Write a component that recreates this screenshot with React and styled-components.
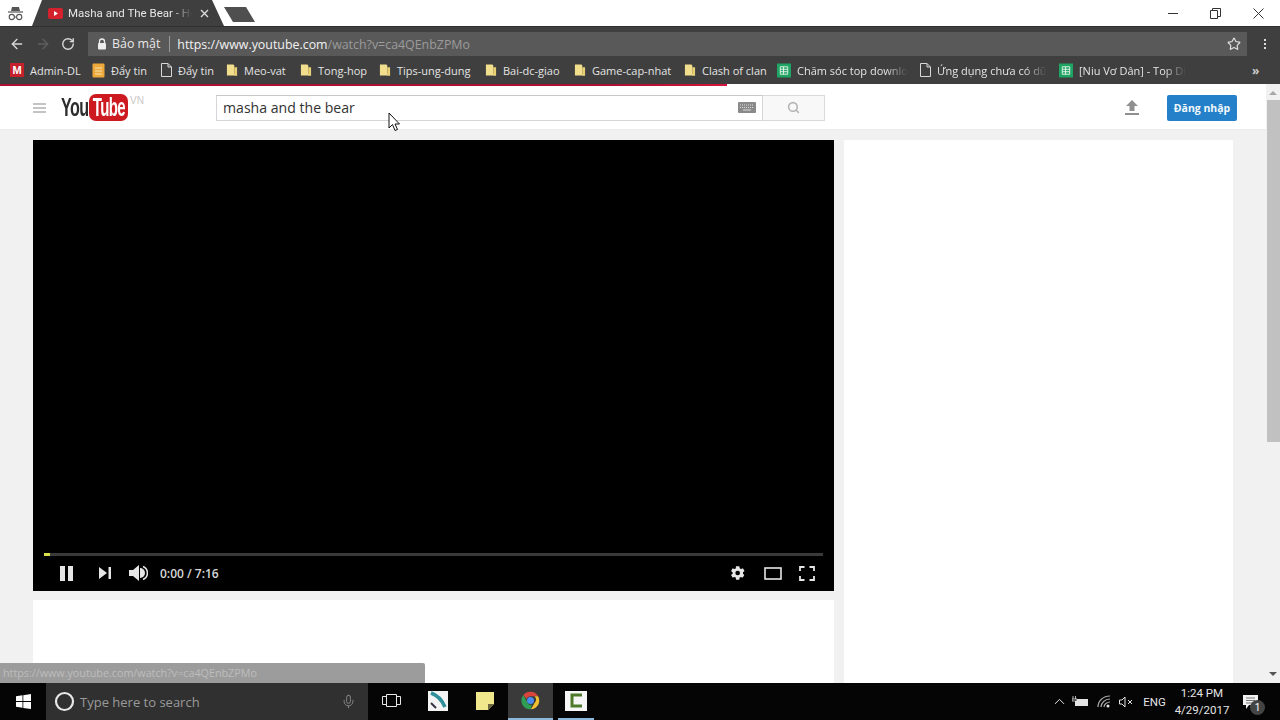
import React from "react";
import styled, { createGlobalStyle } from "styled-components";
import { ArrowLeft, ArrowRight, RotateCw, Star, Search, ChevronUp, Mic } from "lucide-react";

const GlobalStyle = createGlobalStyle`
  html, body {
    margin: 0;
    padding: 0;
    overflow: hidden;
    background: #fff;
  }
  * {
    box-sizing: border-box;
  }
`;

const Screen = styled.div`
  position: relative;
  width: 1280px;
  height: 720px;
  display: flex;
  flex-direction: column;
  overflow: hidden;
  font-family: "Open Sans", "Liberation Sans", sans-serif;
`;

/* browser chrome */
const TabStrip = styled.div`
  height: 27px;
  flex: none;
  display: flex;
  align-items: flex-end;
  background: #fff;
  border-bottom: 1px solid #2f2f2f;
`;

const IncognitoSlot = styled.div`
  width: 32px;
  height: 26px;
  flex: none;
  display: flex;
  align-items: center;
  padding-left: 8px;
`;

const Tab = styled.div`
  width: 192px;
  height: 26px;
  flex: none;
  display: flex;
  align-items: center;
  padding-left: 16px;
  background: #3f3f3f;
  clip-path: polygon(0 100%, 10px 0, 180px 0, 100% 100%);
`;

const TabTitle = styled.span`
  margin-left: 5px;
  width: 124px;
  margin-right: 8px;
  flex: none;
  white-space: nowrap;
  font-family: Roboto, "Liberation Sans", sans-serif;
  font-size: 11.5px;
  color: #e6e6e6;
  -webkit-mask-image: linear-gradient(to right, #000 84%, transparent 100%);
  mask-image: linear-gradient(to right, #000 84%, transparent 100%);
`;

const NewTab = styled.div`
  width: 31px;
  height: 15px;
  margin: 0 0 4px 0;
  flex: none;
  background: #4f4f4f;
  clip-path: polygon(0 0, 22px 0, 100% 100%, 9px 100%);
`;

const WindowControls = styled.div`
  margin-left: auto;
  height: 26px;
  display: flex;
  align-items: center;
  gap: 32px;
  padding-right: 16px;
`;

const Toolbar = styled.div`
  height: 29px;
  flex: none;
  display: flex;
  align-items: center;
  padding: 5px 0 0 9px;
  background: #3f3f3f;
`;

const NavGroup = styled.div`
  display: flex;
  align-items: center;
  gap: 10px;
  width: 79px;
  flex: none;
`;

const Omnibox = styled.div`
  width: 1159px;
  height: 24px;
  flex: none;
  display: flex;
  align-items: center;
  padding: 0 6px 0 9px;
  background: #595959;
  font-size: 12.4px;
`;

const SecureLabel = styled.span`
  margin-left: 5px;
  padding-right: 9px;
  border-right: 1px solid #9a9a9a;
  color: #e8e8e8;
  line-height: 16px;
`;

const UrlHost = styled.span`
  margin-left: 7px;
  color: #f2f2f2;
`;

const UrlPath = styled.span`
  color: #9b9b9b;
`;

const OmniStar = styled.div`
  margin-left: auto;
  display: flex;
`;

const MenuDots = styled.div`
  margin-left: 17px;
  display: flex;
  flex-direction: column;
  gap: 2px;

  span {
    width: 2px;
    height: 2px;
    background: #ddd;
  }
`;

const BookmarkBar = styled.div`
  height: 28px;
  flex: none;
  display: flex;
  align-items: center;
  padding-left: 10px;
  background: #3f3f3f;
`;

const Bookmark = styled.div`
  width: ${(p) => p.$w}px;
  flex: none;
  display: flex;
  align-items: center;
  gap: 6px;
  font-size: 11px;
  color: #e4e4e4;
  white-space: nowrap;
`;

const BookmarkText = styled.span`
  ${(p) =>
    p.$fade &&
    `-webkit-mask-image: linear-gradient(to right, #000 80%, transparent 100%);
     mask-image: linear-gradient(to right, #000 80%, transparent 100%);`}
`;

const Overflow = styled.span`
  margin-left: 9px;
  font-size: 12px;
  font-weight: 700;
  color: #ccc;
`;

const GmailBadge = styled.span`
  width: 14px;
  height: 14px;
  background: #c5202c;
  color: #fff;
  font-size: 11px;
  font-weight: 800;
  line-height: 14px;
  text-align: center;
  font-family: "Liberation Sans", sans-serif;
`;

/* page */
const Viewport = styled.div`
  position: relative;
  flex: 1;
  min-height: 0;
  display: flex;
`;

const LoadBar = styled.div`
  position: absolute;
  left: 0;
  top: 0;
  width: 727px;
  height: 2px;
  background: linear-gradient(to right, #ac1030, #ac1030 85%, #d4143a);
`;

const Content = styled.div`
  flex: 1;
  min-width: 0;
  display: flex;
  flex-direction: column;
  background: #f1f1f1;
`;

const Masthead = styled.div`
  height: 46px;
  flex: none;
  display: flex;
  align-items: center;
  background: #fff;
  border-bottom: 1px solid #ececec;
  padding: 2px 0 0 33px;
`;

const Burger = styled.div`
  width: 13px;
  display: flex;
  flex-direction: column;
  gap: 2px;
  margin-right: 15px;

  span {
    height: 2px;
    background: #c4c4c4;
  }
`;

const Logo = styled.div`
  width: 155px;
  height: 30px;
  flex: none;
  display: flex;
  align-items: center;
  font-family: "Liberation Sans", sans-serif;
`;

const LogoYou = styled.span`
  width: 27px;
  font-size: 26px;
  font-weight: 700;
  letter-spacing: -1px;
  color: #2c2c2c;
  transform: scaleX(0.62);
  transform-origin: left center;
  white-space: nowrap;
`;

const LogoTube = styled.span`
  width: 39px;
  height: 27px;
  margin-left: 1px;
  border-radius: 7px;
  background: #cc1a20;
  color: #fff;
  font-size: 25px;
  font-weight: 700;
  line-height: 27px;
  text-align: center;
  overflow: hidden;

  span {
    display: inline-block;
    letter-spacing: -1px;
    transform: scaleX(0.6);
    transform-origin: center;
    margin-left: -10px;
    margin-right: -10px;
  }
`;

const LogoRegion = styled.span`
  margin: -14px 0 0 2px;
  font-size: 10px;
  color: #c8c8c8;
`;

const SearchForm = styled.div`
  width: 609px;
  height: 26px;
  flex: none;
  display: flex;
`;

const SearchInput = styled.div`
  flex: 1;
  display: flex;
  align-items: center;
  justify-content: space-between;
  padding: 0 6px;
  border: 1px solid #d6d6d6;
  border-top-color: #c8c8c8;
  font-size: 14.1px;
  color: #333;
`;

const SearchButton = styled.div`
  width: 62px;
  flex: none;
  display: flex;
  align-items: center;
  justify-content: center;
  background: #f8f8f8;
  border: 1px solid #d9d9d9;
  border-left: none;
`;

const MastActions = styled.div`
  margin-left: auto;
  padding-right: 29px;
  display: flex;
  align-items: center;
  gap: 28px;
`;

const SignIn = styled.div`
  width: 70px;
  height: 26px;
  display: flex;
  align-items: center;
  justify-content: center;
  border-radius: 2px;
  background: #2480c8;
  color: #f2f8fc;
  font-size: 10.5px;
  font-weight: 700;
`;

const Columns = styled.div`
  flex: 1;
  min-height: 0;
  display: flex;
  gap: 10px;
  padding: 10px 0 0 33px;
`;

const MainColumn = styled.div`
  width: 801px;
  flex: none;
  display: flex;
  flex-direction: column;
  gap: 9px;
`;

const Player = styled.div`
  height: 451px;
  flex: none;
  display: flex;
  flex-direction: column;
  justify-content: flex-end;
  background: #000;
`;

const Progress = styled.div`
  height: 3px;
  margin: 0 11px;
  background: #3a3a3a;

  span {
    display: block;
    width: 6px;
    height: 3px;
    background: #d7e04a;
  }
`;

const Controls = styled.div`
  height: 34px;
  margin-bottom: 1px;
  display: flex;
  align-items: center;
  padding: 0 19px 0 27px;
  color: #ddd;
`;

const TimeLabel = styled.span`
  margin-left: 12px;
  font-size: 12px;
  font-weight: 600;
  color: #d8d8d8;
`;

const ControlGap = styled.span`
  width: ${(p) => p.$w}px;
  flex: ${(p) => (p.$grow ? 1 : "none")};
`;

const InfoCard = styled.div`
  flex: 1;
  background: #fff;
`;

const Sidebar = styled.div`
  width: 389px;
  flex: none;
  background: #fff;
`;

const ScrollTrack = styled.div`
  width: 14px;
  flex: none;
  display: flex;
  flex-direction: column;
  align-items: center;
  justify-content: space-between;
  background: #f1f1f1;
  padding: 7px 0;
`;

const ScrollThumb = styled.div`
  position: absolute;
  top: 16px;
  right: 0;
  width: 13px;
  height: 342px;
  background: #c1c1c1;
`;

const Arrow = styled.span`
  width: 0;
  height: 0;
  border-left: 4px solid transparent;
  border-right: 4px solid transparent;
  ${(p) => (p.$up ? "border-bottom: 4px solid #a8a8a8;" : "border-top: 4px solid #555;")}
`;

const StatusBubble = styled.div`
  position: absolute;
  left: 0;
  bottom: 0;
  width: 425px;
  height: 20px;
  padding-left: 3px;
  display: flex;
  align-items: center;
  background: #9c9c9c;
  border-top-right-radius: 2px;
  font-size: 10.75px;
  color: #bdbdbd;
`;

/* taskbar */
const Taskbar = styled.div`
  height: 37px;
  flex: none;
  display: flex;
  align-items: center;
  background: #050505;
`;

const StartButton = styled.div`
  width: 46px;
  height: 100%;
  flex: none;
  display: flex;
  align-items: center;
  justify-content: center;
`;

const SearchBox = styled.div`
  width: 322px;
  height: 100%;
  flex: none;
  display: flex;
  align-items: center;
  padding: 0 12px 0 8px;
  background: #303030;
  color: #9a9a9a;
  font-size: 13px;
`;

const SearchHint = styled.span`
  margin-left: 5px;
  flex: 1;
`;

const TaskSlot = styled.div`
  width: ${(p) => p.$w}px;
  margin-left: ${(p) => p.$gap || 0}px;
  height: 100%;
  flex: none;
  display: flex;
  align-items: center;
  justify-content: center;
  background: ${(p) => (p.$active ? "#3a3a3a" : "transparent")};
  border-bottom: 2px solid ${(p) => (p.$open ? "#8cb8dc" : "transparent")};
`;

const Tray = styled.div`
  margin-left: auto;
  height: 100%;
  display: flex;
  align-items: center;
  color: #e4e4e4;
  font-family: Roboto, "Liberation Sans", sans-serif;
`;

const TrayIcon = styled.div`
  width: ${(p) => p.$w}px;
  display: flex;
  justify-content: center;
`;

const TrayLang = styled.span`
  width: 31px;
  padding-left: 8px;
  font-size: 11.5px;
  text-align: center;
`;

const Clock = styled.div`
  width: 72px;
  text-align: center;
  font-size: 11.5px;
  line-height: 17px;
`;

const Notification = styled.div`
  position: relative;
  width: 42px;
  padding-right: 18px;
  display: flex;
  justify-content: center;
`;

const NotificationCount = styled.span`
  position: absolute;
  right: 15px;
  bottom: -6px;
  width: 15px;
  height: 15px;
  border-radius: 50%;
  background: #444;
  color: #fff;
  font-size: 10px;
  line-height: 15px;
  text-align: center;
`;

const Cursor = styled.svg`
  position: absolute;
  left: 388px;
  top: 112px;
`;

const bookmarks = [
  { kind: "gmail", label: "Admin-DL", w: 82 },
  { kind: "doc", label: "Đẩy tin", w: 69 },
  { kind: "page", label: "Đẩy tin", w: 65 },
  { kind: "folder", label: "Meo-vat", w: 74 },
  { kind: "folder", label: "Tong-hop", w: 79 },
  { kind: "folder", label: "Tips-ung-dung", w: 106 },
  { kind: "folder", label: "Bai-dc-giao", w: 89 },
  { kind: "folder", label: "Game-cap-nhat", w: 110 },
  { kind: "folder", label: "Clash of clan", w: 93 },
  { kind: "sheet", label: "Chăm sóc top downlo", w: 143, fade: true },
  { kind: "page", label: "Ứng dụng chưa có dữ", w: 139, fade: true },
  { kind: "sheet", label: "[Niu Vơ Dân] - Top Di", w: 184, fade: true },
];

function BookmarkIcon({ kind }) {
  if (kind === "gmail") return <GmailBadge>M</GmailBadge>;
  if (kind === "folder")
    return (
      <svg width="12" height="14" viewBox="0 0 13 14">
        <path d="M1 1h7l1 1v9l3 1v1H1z" fill="#f2df8e" />
        <path d="M9 4h3v9H9z" fill="#e8d074" />
      </svg>
    );
  if (kind === "doc")
    return (
      <svg width="13" height="15" viewBox="0 0 13 15">
        <rect x="0.5" y="0.5" width="12" height="14" rx="1" fill="#eda93a" />
        <path d="M3 5h7M3 8h7M3 11h7" stroke="#f8e3b8" strokeWidth="1" />
      </svg>
    );
  if (kind === "sheet")
    return (
      <svg width="14" height="15" viewBox="0 0 15 15">
        <rect width="15" height="15" fill="#1fa463" />
        <path d="M3.500 3.500h8v8h-8zM3.500 6.200h8M3.500 8.800h8M7 3.500v8" fill="none" stroke="#e4f5ec" strokeWidth="1" />
      </svg>
    );
  return (
    <svg width="11" height="14" viewBox="0 0 11 14">
      <path d="M.5.500h6.500l3.500 3.500v9.500h-10zM7 .5V4h3.500" fill="none" stroke="#d8d8d8" strokeWidth="1" />
    </svg>
  );
}

function Incognito() {
  return (
    <svg width="15" height="15" viewBox="0 0 15 15">
      <path d="M4 1h7l1 4H3z" fill="#555" />
      <path d="M0 6h15" stroke="#555" strokeWidth="1.200" />
      <circle cx="3.800" cy="11" r="2.600" fill="none" stroke="#555" strokeWidth="1.100" />
      <circle cx="11.200" cy="11" r="2.600" fill="none" stroke="#555" strokeWidth="1.100" />
      <path d="M6.400 11h2.200" stroke="#555" />
    </svg>
  );
}

function ChromeLogo() {
  return (
    <svg width="21" height="21" viewBox="0 0 48 48">
      <path d="M24 4a20 20 0 0 1 17.300 10H24a10 10 0 0 0-9.300 6.400L7.700 11.600A20 20 0 0 1 24 4z" fill="#d9453c" />
      <path d="M41.300 14A20 20 0 0 1 25 44l8.600-14.900A10 10 0 0 0 33 14z" fill="#f3c130" />
      <path d="M7.700 11.600 16 26a10 10 0 0 0 11 7.600L25 44A20 20 0 0 1 7.700 11.600z" fill="#2f9e52" />
      <circle cx="24" cy="24" r="8" fill="#4a8bf0" />
    </svg>
  );
}

export default function App() {
  return (
    <Screen>
      <GlobalStyle />
      <TabStrip>
        <IncognitoSlot>
          <Incognito />
        </IncognitoSlot>
        <Tab>
          <svg width="15" height="11" viewBox="0 0 15 11">
            <rect width="15" height="11" rx="2" fill="#d3212d" />
            <path d="M6 3l4 2.500L6 8z" fill="#fff" />
          </svg>
          <TabTitle>Masha and The Bear - Ho</TabTitle>
          <svg width="9" height="9" viewBox="0 0 9 9">
            <path d="M1 1l7 7M8 1L1 8" stroke="#ddd" strokeWidth="1.300" />
          </svg>
        </Tab>
        <NewTab />
        <WindowControls>
          <svg width="10" height="10" viewBox="0 0 10 10">
            <path d="M0 5.500h10" stroke="#333" />
          </svg>
          <svg width="11" height="11" viewBox="0 0 11 11">
            <path d="M.5 2.500h7v8h-7zM2.500 2.500v-2h8v8h-3" fill="none" stroke="#333" />
          </svg>
          <svg width="11" height="11" viewBox="0 0 11 11">
            <path d="M.5.500l10 10M10.500.500l-10 10" stroke="#333" />
          </svg>
        </WindowControls>
      </TabStrip>

      <Toolbar>
        <NavGroup>
          <ArrowLeft size={16} color="#d8d8d8" strokeWidth={2} />
          <ArrowRight size={16} color="#5f5f5f" strokeWidth={2} />
          <RotateCw size={14} color="#d8d8d8" strokeWidth={2.400} />
        </NavGroup>
        <Omnibox>
          <svg width="10" height="12" viewBox="0 0 10 12">
            <path d="M2.500 5V3.500a2.500 2.500 0 0 1 5 0V5" fill="none" stroke="#eee" strokeWidth="1.300" />
            <rect x="1" y="5" width="8" height="6.500" rx="1" fill="#eee" />
          </svg>
          <SecureLabel>Bảo mật</SecureLabel>
          <UrlHost>
            https://www.youtube.com<UrlPath>/watch?v=ca4QEnbZPMo</UrlPath>
          </UrlHost>
          <OmniStar>
            <Star size={14} color="#e0e0e0" strokeWidth={2} />
          </OmniStar>
        </Omnibox>
        <MenuDots>
          <span />
          <span />
          <span />
        </MenuDots>
      </Toolbar>

      <BookmarkBar>
        {bookmarks.map((b, i) => (
          <Bookmark key={i} $w={b.w}>
            <BookmarkIcon kind={b.kind} />
            <BookmarkText $fade={b.fade}>{b.label}</BookmarkText>
          </Bookmark>
        ))}
        <Overflow>»</Overflow>
      </BookmarkBar>

      <Viewport>
        <Content>
          <Masthead>
            <Burger>
              <span />
              <span />
              <span />
            </Burger>
            <Logo>
              <LogoYou>You</LogoYou>
              <LogoTube>
                <span>Tube</span>
              </LogoTube>
              <LogoRegion>VN</LogoRegion>
            </Logo>
            <SearchForm>
              <SearchInput>
                masha and the bear
                <svg width="18" height="11" viewBox="0 0 18 11">
                  <rect width="18" height="11" rx="1" fill="#8a8a8a" />
                  <path d="M2 3h14M2 5.500h14" stroke="#d8d8d8" strokeDasharray="1 1" />
                  <path d="M5 8h8" stroke="#d8d8d8" />
                </svg>
              </SearchInput>
              <SearchButton>
                <Search size={13} color="#b5b5b5" strokeWidth={3} />
              </SearchButton>
            </SearchForm>
            <MastActions>
              <svg width="14" height="15" viewBox="0 0 14 15">
                <path d="M7 0l6 6H9.500v5h-5V6H1zM0 13h14v2H0z" fill="#8f8f8f" />
              </svg>
              <SignIn>Đăng nhập</SignIn>
            </MastActions>
          </Masthead>
          <Columns>
            <MainColumn>
              <Player>
                <Progress>
                  <span />
                </Progress>
                <Controls>
                  <svg width="13" height="15" viewBox="0 0 13 15">
                    <path d="M0 0h5v15H0zM8 0h5v15H8z" fill="#e6e6e6" />
                  </svg>
                  <ControlGap $w={26} />
                  <svg width="12" height="12" viewBox="0 0 12 12">
                    <path d="M0 0l8 6-8 6zM9.500 0H12v12H9.500z" fill="#e6e6e6" />
                  </svg>
                  <ControlGap $w={18} />
                  <svg width="19" height="18" viewBox="0 0 19 18">
                    <path d="M0 6h4l6-5v16l-6-5H0z" fill="#e6e6e6" />
                    <path d="M11 4a5 5 0 0 1 0 10z" fill="#e6e6e6" />
                    <path d="M14 2.500a7 7 0 0 1 0 13" fill="none" stroke="#e6e6e6" strokeWidth="1.500" />
                  </svg>
                  <TimeLabel>0:00 / 7:16</TimeLabel>
                  <ControlGap $grow />
                  <svg width="16" height="16" viewBox="0 0 24 24">
                    <path
                      d="M19.400 13c.1-.3.100-.7.100-1s0-.7-.1-1l2.100-1.600c.2-.2.200-.4.100-.6l-2-3.500c-.1-.2-.4-.3-.6-.2l-2.500 1c-.5-.4-1.100-.7-1.700-1L14 2.400c0-.2-.2-.4-.5-.4h-4c-.2 0-.4.200-.5.400l-.4 2.700c-.6.200-1.200.6-1.700 1l-2.500-1c-.2-.1-.5 0-.6.200l-2 3.500c-.1.200-.1.400.1.600L4 11c0 .3-.1.700-.1 1s0 .7.100 1l-2.100 1.600c-.2.200-.2.400-.1.600l2 3.500c.1.200.4.300.6.200l2.500-1c.5.400 1.100.7 1.700 1l.4 2.700c0 .2.200.4.500.4h4c.2 0 .4-.2.500-.4l.4-2.700c.6-.2 1.200-.6 1.700-1l2.500 1c.2.100.5 0 .6-.2l2-3.500c.1-.2.100-.4-.1-.6zM11.500 15.500a3.500 3.500 0 1 1 0-7 3.500 3.500 0 0 1 0 7z"
                      fill="#e6e6e6"
                    />
                  </svg>
                  <ControlGap $w={18} />
                  <svg width="18" height="13" viewBox="0 0 18 13">
                    <rect x="1" y="1" width="16" height="11" fill="none" stroke="#e6e6e6" strokeWidth="1.600" />
                  </svg>
                  <ControlGap $w={17} />
                  <svg width="16" height="15" viewBox="0 0 16 15">
                    <path d="M1 5V1h4.500M10.500 1H15v4M15 10v4h-4.500M5.500 14H1v-4" fill="none" stroke="#e6e6e6" strokeWidth="1.800" />
                  </svg>
                </Controls>
              </Player>
              <InfoCard />
            </MainColumn>
            <Sidebar />
          </Columns>
        </Content>
        <ScrollTrack>
          <Arrow $up />
          <ScrollThumb />
          <Arrow />
        </ScrollTrack>
        <LoadBar />
        <StatusBubble>https://www.youtube.com/watch?v=ca4QEnbZPMo</StatusBubble>
      </Viewport>

      <Taskbar>
        <StartButton>
          <svg width="15" height="15" viewBox="0 0 15 15">
            <path d="M0 2.200l6.500-.9v5.800H0zM7.300 1.200L15 0v7.100H7.300zM0 7.900h6.500v5.800L0 12.800zM7.300 7.900H15V15l-7.700-1.100z" fill="#fff" />
          </svg>
        </StartButton>
        <SearchBox>
          <svg width="21" height="21" viewBox="0 0 21 21">
            <circle cx="10.500" cy="10.500" r="8.500" fill="none" stroke="#e8e8e8" strokeWidth="2.200" />
          </svg>
          <SearchHint>Type here to search</SearchHint>
          <Mic size={15} color="#8a8a8a" strokeWidth={1.500} />
        </SearchBox>
        <TaskSlot $w={46}>
          <svg width="19" height="15" viewBox="0 0 19 15">
            <path d="M4.500 1.500h10v12h-10zM4.500 3.500H.5v8h4M14.500 3.500h4v8h-4" fill="none" stroke="#e8e8e8" />
          </svg>
        </TaskSlot>
        <TaskSlot $w={48}>
          <svg width="20" height="20" viewBox="0 0 20 20">
            <rect width="20" height="20" fill="#f4f4f4" />
            <path d="M3 2c6 2 11 7 14 14" fill="none" stroke="#2f8f9a" strokeWidth="3.500" />
            <path d="M3 12l5 5" stroke="#334" strokeWidth="2" />
          </svg>
        </TaskSlot>
        <TaskSlot $w={46}>
          <svg width="18" height="18" viewBox="0 0 18 18">
            <path d="M0 0h18v12l-6 6H0z" fill="#f0e68c" />
            <path d="M12 18v-6h6z" fill="#6b6540" />
          </svg>
        </TaskSlot>
        <TaskSlot $w={45} $active $open>
          <ChromeLogo />
        </TaskSlot>
        <TaskSlot $w={36} $gap={5} $open>
          <svg width="22" height="20" viewBox="0 0 22 20">
            <rect width="22" height="20" fill="#f6f6f6" />
            <path d="M17 4H7v11h10" fill="none" stroke="#4c7a2a" strokeWidth="3" />
          </svg>
        </TaskSlot>
        <Tray>
          <TrayIcon $w={20}>
            <ChevronUp size={17} color="#e4e4e4" strokeWidth={1.400} />
          </TrayIcon>
          <TrayIcon $w={22}>
            <svg width="16" height="12" viewBox="0 0 16 12">
              <rect x="3" y="3" width="13" height="7" fill="#e4e4e4" />
              <path d="M1 0v3M3.500 0v3M0 3h5v2H0z" stroke="#e4e4e4" strokeWidth="0.800" />
            </svg>
          </TrayIcon>
          <TrayIcon $w={26}>
            <svg width="14" height="13" viewBox="0 0 14 13">
              <path d="M1 12C1 6 6 1 13 1M4 12c0-4 4-8 9-8M7 12c0-2.500 3-5 6-5" fill="none" stroke="#a8a8a8" strokeWidth="1.200" />
              <circle cx="11" cy="11" r="1.500" fill="#e4e4e4" />
            </svg>
          </TrayIcon>
          <TrayIcon $w={18}>
            <svg width="15" height="12" viewBox="0 0 15 12">
              <path d="M.5 4h2.500l3-3v10L3 8H.5z" fill="none" stroke="#e4e4e4" />
              <path d="M9 4l4 4M13 4l-4 4" stroke="#e4e4e4" />
            </svg>
          </TrayIcon>
          <TrayLang>ENG</TrayLang>
          <Clock>
            1:24 PM
            <br />
            4/29/2017
          </Clock>
          <Notification>
            <svg width="15" height="14" viewBox="0 0 15 14">
              <path d="M0 0h15v10H6l-3 4v-4H0z" fill="#f2f2f2" />
              <path d="M3 3h9M3 5.500h9M3 8h6" stroke="#555" strokeWidth="0.800" />
            </svg>
            <NotificationCount>1</NotificationCount>
          </Notification>
        </Tray>
      </Taskbar>

      <Cursor width="12" height="20" viewBox="0 0 12 20">
        <path d="M1 1v15l3.500-3.500L7 18.500l2.500-1-2.500-5.500h4.500z" fill="#fff" stroke="#111" strokeWidth="1" />
      </Cursor>
    </Screen>
  );
}
